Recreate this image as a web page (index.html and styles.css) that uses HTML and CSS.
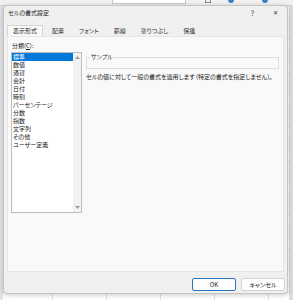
FILE: index.html
```html
<!DOCTYPE html>
<html lang="ja">
<head>
    <meta charset="UTF-8">
    <title>セルの書式設定</title>
    <link rel="stylesheet" href="styles.css">
</head>
<body>

    <div class="sheet-top">
        <div class="namebox"></div>
        <span class="tool-icon grey"></span>
        <span class="tool-icon blue"></span>
        <span class="tool-icon blue"></span>
    </div>

    <div class="dialog">
        <div class="titlebar">
            <span class="title">セルの書式設定</span>
            <span class="tb-btn">?</span>
            <span class="tb-btn close">✕</span>
        </div>

        <div class="tabs">
            <div class="tab active">表示形式</div>
            <div class="tab">配置</div>
            <div class="tab">フォント</div>
            <div class="tab">罫線</div>
            <div class="tab">塗りつぶし</div>
            <div class="tab">保護</div>
        </div>

        <div class="panel">
            <div class="left-col">
                <div class="label">分類(<u>C</u>):</div>
                <div class="listbox">
                    <ul class="items">
                        <li class="selected">標準</li>
                        <li>数値</li>
                        <li>通貨</li>
                        <li>会計</li>
                        <li>日付</li>
                        <li>時刻</li>
                        <li>パーセンテージ</li>
                        <li>分数</li>
                        <li>指数</li>
                        <li>文字列</li>
                        <li>その他</li>
                        <li>ユーザー定義</li>
                    </ul>
                    <div class="scrollbar">
                        <svg width="5" height="3" viewBox="0 0 5 3"><path d="M0 3 L2.5 0 L5 3 Z" fill="#9a9a9a"/></svg>
                        <svg width="5" height="3" viewBox="0 0 5 3"><path d="M0 0 L2.5 3 L5 0 Z" fill="#9a9a9a"/></svg>
                    </div>
                </div>
            </div>

            <div class="right-col">
                <fieldset class="sample">
                    <legend>サンプル</legend>
                </fieldset>
                <p class="desc">セルの値に対して一般の書式を適用します (特定の書式を指定しません)。</p>
            </div>
        </div>

        <div class="buttons">
            <button class="btn primary">OK</button>
            <button class="btn">キャンセル</button>
        </div>
    </div>

</body>
</html>
```

FILE: styles.css
```css
body {
    margin: 0;
    width: 293px;
    height: 300px;
    overflow: hidden;
    position: relative;
    font-family: "Noto Sans CJK JP", "Noto Sans", sans-serif;
    font-feature-settings: "palt";
    color: #1a1a1a;
    background-color: #fff;
    background-image:
        linear-gradient(to right, #e4e4e4 3px, transparent 3px),
        linear-gradient(to left, #dcdcdc 4px, transparent 4px),
        linear-gradient(to right, #e2e2e2 1px, transparent 1px),
        linear-gradient(to bottom, #e2e2e2 1px, transparent 1px);
    background-size: 100% 100%, 100% 100%, 54px 100%, 100% 11px;
    background-position: 0 0, 0 0, 52px 0, 0 6px;
}
.sheet-top {
    height: 5px;
    background: #f1f1f1;
    border-bottom: 1px solid #d6d6d6;
    display: flex;
    align-items: flex-start;
}
.namebox {
    width: 72px;
    height: 3px;
    margin-left: 112px;
    background: #fff;
    border: 1px solid #c8c8c8;
    border-top: none;
}
.tool-icon {
    width: 6px;
    height: 3px;
    margin-left: 17px;
}
.tool-icon.grey {
    margin-left: 19px;
    border: 1px solid #888;
    border-top: none;
    width: 4px;
    height: 2px;
}
.tool-icon.blue {
    background: #3c7fc4;
    border-radius: 0 0 3px 3px;
}
.tool-icon.blue:last-child {
    margin-left: 28px;
}
.dialog {
    position: absolute;
    left: 3px;
    top: 5px;
    width: 285px;
    height: 289px;
    box-sizing: border-box;
    background: #f0f0f0;
    border: 1px solid #c4c4c4;
    border-radius: 4px;
    box-shadow: 0 1px 5px rgba(0, 0, 0, 0.22);
    display: flex;
    flex-direction: column;
    font-size: 6px;
}
.titlebar {
    height: 13px;
    display: flex;
    align-items: center;
    padding-left: 4px;
    line-height: 8px;
}
.title {
    flex: 1;
    color: #1a1a1a;
}
.tb-btn {
    width: 23px;
    text-align: center;
    font-size: 7px;
    color: #333;
}
.tb-btn.close {
    font-size: 6px;
}
.tabs {
    display: flex;
    padding: 6px 0 0 3px;
    gap: 3px;
}
.tab {
    height: 11px;
    box-sizing: border-box;
    padding: 0 5px;
    line-height: 10px;
    color: #333;
    border: 1px solid transparent;
    border-bottom: none;
}
.tab.active {
    background: #f9f9f9;
    border-color: #d4d4d4;
    color: #1a1a1a;
}
.panel {
    height: 236px;
    margin: 0 3px;
    box-sizing: border-box;
    background: #f9f9f9;
    border: 1px solid #e6e6e6;
    padding: 5px 4px 0 3px;
    display: flex;
    gap: 4px;
}
.label {
    line-height: 8px;
    padding-left: 1px;
}
.label u {
    text-decoration-thickness: 0.5px;
}
.listbox {
    margin-top: 2px;
    width: 71px;
    height: 161px;
    box-sizing: border-box;
    border: 1px solid #bdbdbd;
    background: #fff;
    display: flex;
}
.items {
    list-style: none;
    margin: 0;
    padding: 0;
    flex: 1;
}
.items li {
    height: 8px;
    line-height: 8px;
    padding-left: 1px;
    color: #222;
    white-space: nowrap;
}
.items li.selected {
    background: #0078d7;
    color: #fff;
}
.scrollbar {
    width: 8px;
    background: #f2f2f2;
    display: flex;
    flex-direction: column;
    justify-content: space-between;
    align-items: center;
    padding: 3px 0 3px;
}
.right-col {
    flex: 1;
    padding-top: 11px;
}
.sample {
    margin: 0;
    padding: 0 3px;
    height: 14px;
    border: 1px solid #dedede;
}
.sample legend {
    padding: 0 1px;
    line-height: 8px;
    color: #333;
}
.desc {
    margin: 4px 0 0;
    line-height: 8px;
    white-space: nowrap;
    color: #1a1a1a;
}
.buttons {
    display: flex;
    justify-content: flex-end;
    gap: 5px;
    padding: 6px 2px 0 0;
}
.btn {
    width: 44px;
    height: 13px;
    padding: 0;
    font-family: inherit;
    font-size: 6px;
    font-feature-settings: "palt";
    line-height: 11px;
    color: #1a1a1a;
    background: #fdfdfd;
    border: 1px solid #d3d3d3;
    border-radius: 2px;
}
.btn.primary {
    border-color: #2a74c2;
}
```
